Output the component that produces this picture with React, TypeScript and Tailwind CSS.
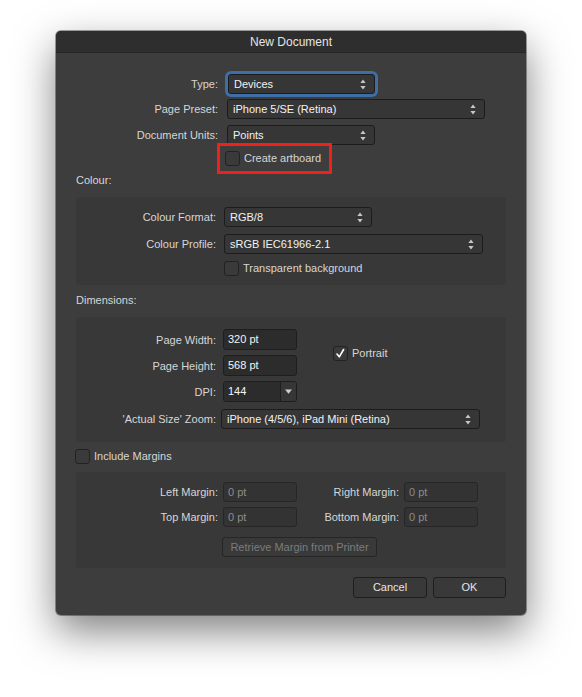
import React from "react";

const font = { fontFamily: '"Liberation Sans", Arial, sans-serif' };

function Arrows() {
  return (
    <svg width="6" height="11" viewBox="0 0 6 11" className="shrink-0">
      <path d="M3 0.5 L5.6 4 L0.4 4 Z" fill="#c8c8c8" />
      <path d="M0.4 7 L5.6 7 L3 10.5 Z" fill="#c8c8c8" />
    </svg>
  );
}

function Select({ value, w, focus }: { value: string; w: string; focus?: boolean }) {
  return (
    <div
      className={
        "h-[20px] flex items-center justify-between pl-[5px] pr-[8px] rounded-[3px] border border-[#1c1c1c] bg-[#363636] text-[#f2f2f2] text-[11px] " +
        w +
        (focus ? " ring-[3px] ring-[#3d6ea6]" : "")
      }
    >
      <span>{value}</span>
      <Arrows />
    </div>
  );
}

function Input({ value, disabled, h = "h-[21px]" }: { value: string; disabled?: boolean; h?: string }) {
  return (
    <div
      className={
        "w-[74px] flex items-center pl-[4px] rounded-[3px] border text-[11px] " +
        h +
        (disabled
          ? " border-[#262626] bg-[#333333] text-[#8c8c8c]"
          : " border-[#1e1e1e] bg-[#2c2c2c] text-[#f4f4f4]")
      }
    >
      {value}
    </div>
  );
}

function Check({ checked }: { checked?: boolean }) {
  return (
    <div className="w-[15px] h-[15px] rounded-[3px] border border-[#222222] bg-[#3a3a3a] flex items-center justify-center shrink-0">
      {checked && (
        <svg width="11" height="11" viewBox="0 0 11 11">
          <path d="M2 6 L4.3 8.8 L8.6 1.5" stroke="#ffffff" strokeWidth="1.6" fill="none" strokeLinecap="round" strokeLinejoin="round" />
        </svg>
      )}
    </div>
  );
}

function Label({ text, w }: { text: string; w: string }) {
  return <div className={"text-right text-[#d6d6d6] text-[11px] leading-[14px] shrink-0 " + w}>{text}</div>;
}

export default function App() {
  return (
    <div className="w-[582px] h-[697px] bg-white pt-[31px] pl-[56px] overflow-hidden" style={font}>
      <div className="w-[470px] h-[584px] rounded-[5px] bg-[#3d3d3d] shadow-[0_16px_40px_rgba(0,0,0,0.5),0_0_0_1px_rgba(0,0,0,0.35)] overflow-hidden flex flex-col">
        {/* title bar */}
        <div className="h-[22px] shrink-0 bg-[#2e2e2e] border-b border-[#262626] flex items-center justify-center text-[12px] text-[#e4e4e4]">
          New Document
        </div>

        {/* top section */}
        <div className="flex flex-col">
          <div className="flex items-center mt-[21px]">
            <Label text="Type:" w="w-[162px]" />
            <div className="ml-[10px]">
              <Select value="Devices" w="w-[147px]" focus />
            </div>
          </div>
          <div className="flex items-center mt-[5px]">
            <Label text="Page Preset:" w="w-[162px]" />
            <div className="ml-[9px]">
              <Select value="iPhone 5/SE (Retina)" w="w-[258px]" />
            </div>
          </div>
          <div className="flex items-center mt-[6px]">
            <Label text="Document Units:" w="w-[162px]" />
            <div className="ml-[9px]">
              <Select value="Points" w="w-[148px]" />
            </div>
          </div>
          <div className="relative h-[15px] flex items-center mt-[6px] ml-[169px] gap-[4px]">
            <Check />
            <span className="text-[11px] leading-[15px] text-[#d6d6d6]">Create artboard</span>
            <div className="absolute left-[-8px] top-[-8px] w-[115px] h-[31px] border-[3px] border-[#f0201a]" />
          </div>
        </div>

        <div className="px-[20px] flex flex-col">
          {/* Colour */}
          <div className="mt-[7px] leading-[14px] text-[11px] text-[#d6d6d6]">Colour:</div>
          <div className="mt-[10px] h-[88px] rounded-[4px] bg-[#383838] pt-[10px] flex flex-col">
            <div className="flex items-center">
              <Label text="Colour Format:" w="w-[140px]" />
              <div className="ml-[8px]">
                <Select value="RGB/8" w="w-[148px]" />
              </div>
            </div>
            <div className="flex items-center mt-[7px]">
              <Label text="Colour Profile:" w="w-[140px]" />
              <div className="ml-[8px]">
                <Select value="sRGB IEC61966-2.1" w="w-[259px]" />
              </div>
            </div>
            <div className="flex h-[15px] items-center mt-[7px] ml-[148px] gap-[4px]">
              <Check />
              <span className="text-[11px] leading-[15px] text-[#d6d6d6]">Transparent background</span>
            </div>
          </div>

          {/* Dimensions */}
          <div className="mt-[8px] leading-[14px] text-[11px] text-[#d6d6d6]">Dimensions:</div>
          <div className="mt-[10px] h-[125px] rounded-[4px] bg-[#383838] pt-[12px] flex flex-col">
            <div className="flex">
              <div className="flex flex-col">
                <div className="flex items-center">
                  <Label text="Page Width:" w="w-[140px]" />
                  <div className="ml-[7px]">
                    <Input value="320 pt" />
                  </div>
                </div>
                <div className="flex items-center mt-[5px]">
                  <Label text="Page Height:" w="w-[140px]" />
                  <div className="ml-[7px]">
                    <Input value="568 pt" />
                  </div>
                </div>
                <div className="flex items-center mt-[5px]">
                  <Label text="DPI:" w="w-[140px]" />
                  <div className="ml-[7px] w-[74px] h-[21px] flex rounded-[3px] border border-[#1e1e1e] overflow-hidden">
                    <div className="flex-1 bg-[#2c2c2c] flex items-center pl-[4px] text-[11px] text-[#f4f4f4]">144</div>
                    <div className="w-[16px] bg-[#363636] border-l border-[#1e1e1e] flex items-center justify-center">
                      <svg width="7" height="5" viewBox="0 0 7 5">
                        <path d="M0 0.5 L7 0.5 L3.5 4.8 Z" fill="#d0d0d0" />
                      </svg>
                    </div>
                  </div>
                </div>
              </div>
              <div className="flex h-[15px] items-center gap-[4px] ml-[36px] mt-[17px] self-start">
                <Check checked />
                <span className="text-[11px] leading-[15px] text-[#d6d6d6]">Portrait</span>
              </div>
            </div>
            <div className="flex items-center mt-[7px]">
              <Label text="'Actual Size' Zoom:" w="w-[140px]" />
              <div className="ml-[5px]">
                <Select value="iPhone (4/5/6), iPad Mini (Retina)" w="w-[259px]" />
              </div>
            </div>
          </div>

          {/* Include margins */}
          <div className="flex h-[15px] items-center mt-[7px] gap-[4px] ml-[-1px]">
            <Check />
            <span className="text-[11px] leading-[15px] text-[#d6d6d6]">Include Margins</span>
          </div>
          <div className="mt-[8px] h-[96px] rounded-[4px] bg-[#383838] pt-[10px] flex flex-col">
            <div className="flex items-center">
              <Label text="Left Margin:" w="w-[142px]" />
              <div className="ml-[5px]">
                <Input value="0 pt" disabled h="h-[20px]" />
              </div>
              <Label text="Right Margin:" w="w-[102px]" />
              <div className="ml-[5px]">
                <Input value="0 pt" disabled h="h-[20px]" />
              </div>
            </div>
            <div className="flex items-center mt-[5px]">
              <Label text="Top Margin:" w="w-[142px]" />
              <div className="ml-[5px]">
                <Input value="0 pt" disabled h="h-[20px]" />
              </div>
              <Label text="Bottom Margin:" w="w-[102px]" />
              <div className="ml-[5px]">
                <Input value="0 pt" disabled h="h-[20px]" />
              </div>
            </div>
            <div className="mt-[10px] ml-[146px] w-[155px] h-[20px] rounded-[3px] border border-[#262626] bg-[#393939] flex items-center justify-center text-[11px] text-[#7c7c7c]">
              Retrieve Margin from Printer
            </div>
          </div>

          {/* buttons */}
          <div className="flex justify-end gap-[6px] mt-[9px]">
            <div className="w-[74px] h-[21px] rounded-[3px] border border-[#1e1e1e] bg-[#393939] flex items-center justify-center text-[11px] text-[#e6e6e6]">
              Cancel
            </div>
            <div className="w-[73px] h-[21px] rounded-[3px] border border-[#1e1e1e] bg-[#393939] flex items-center justify-center text-[11px] text-[#e6e6e6]">
              OK
            </div>
          </div>
        </div>
      </div>
    </div>
  );
}
